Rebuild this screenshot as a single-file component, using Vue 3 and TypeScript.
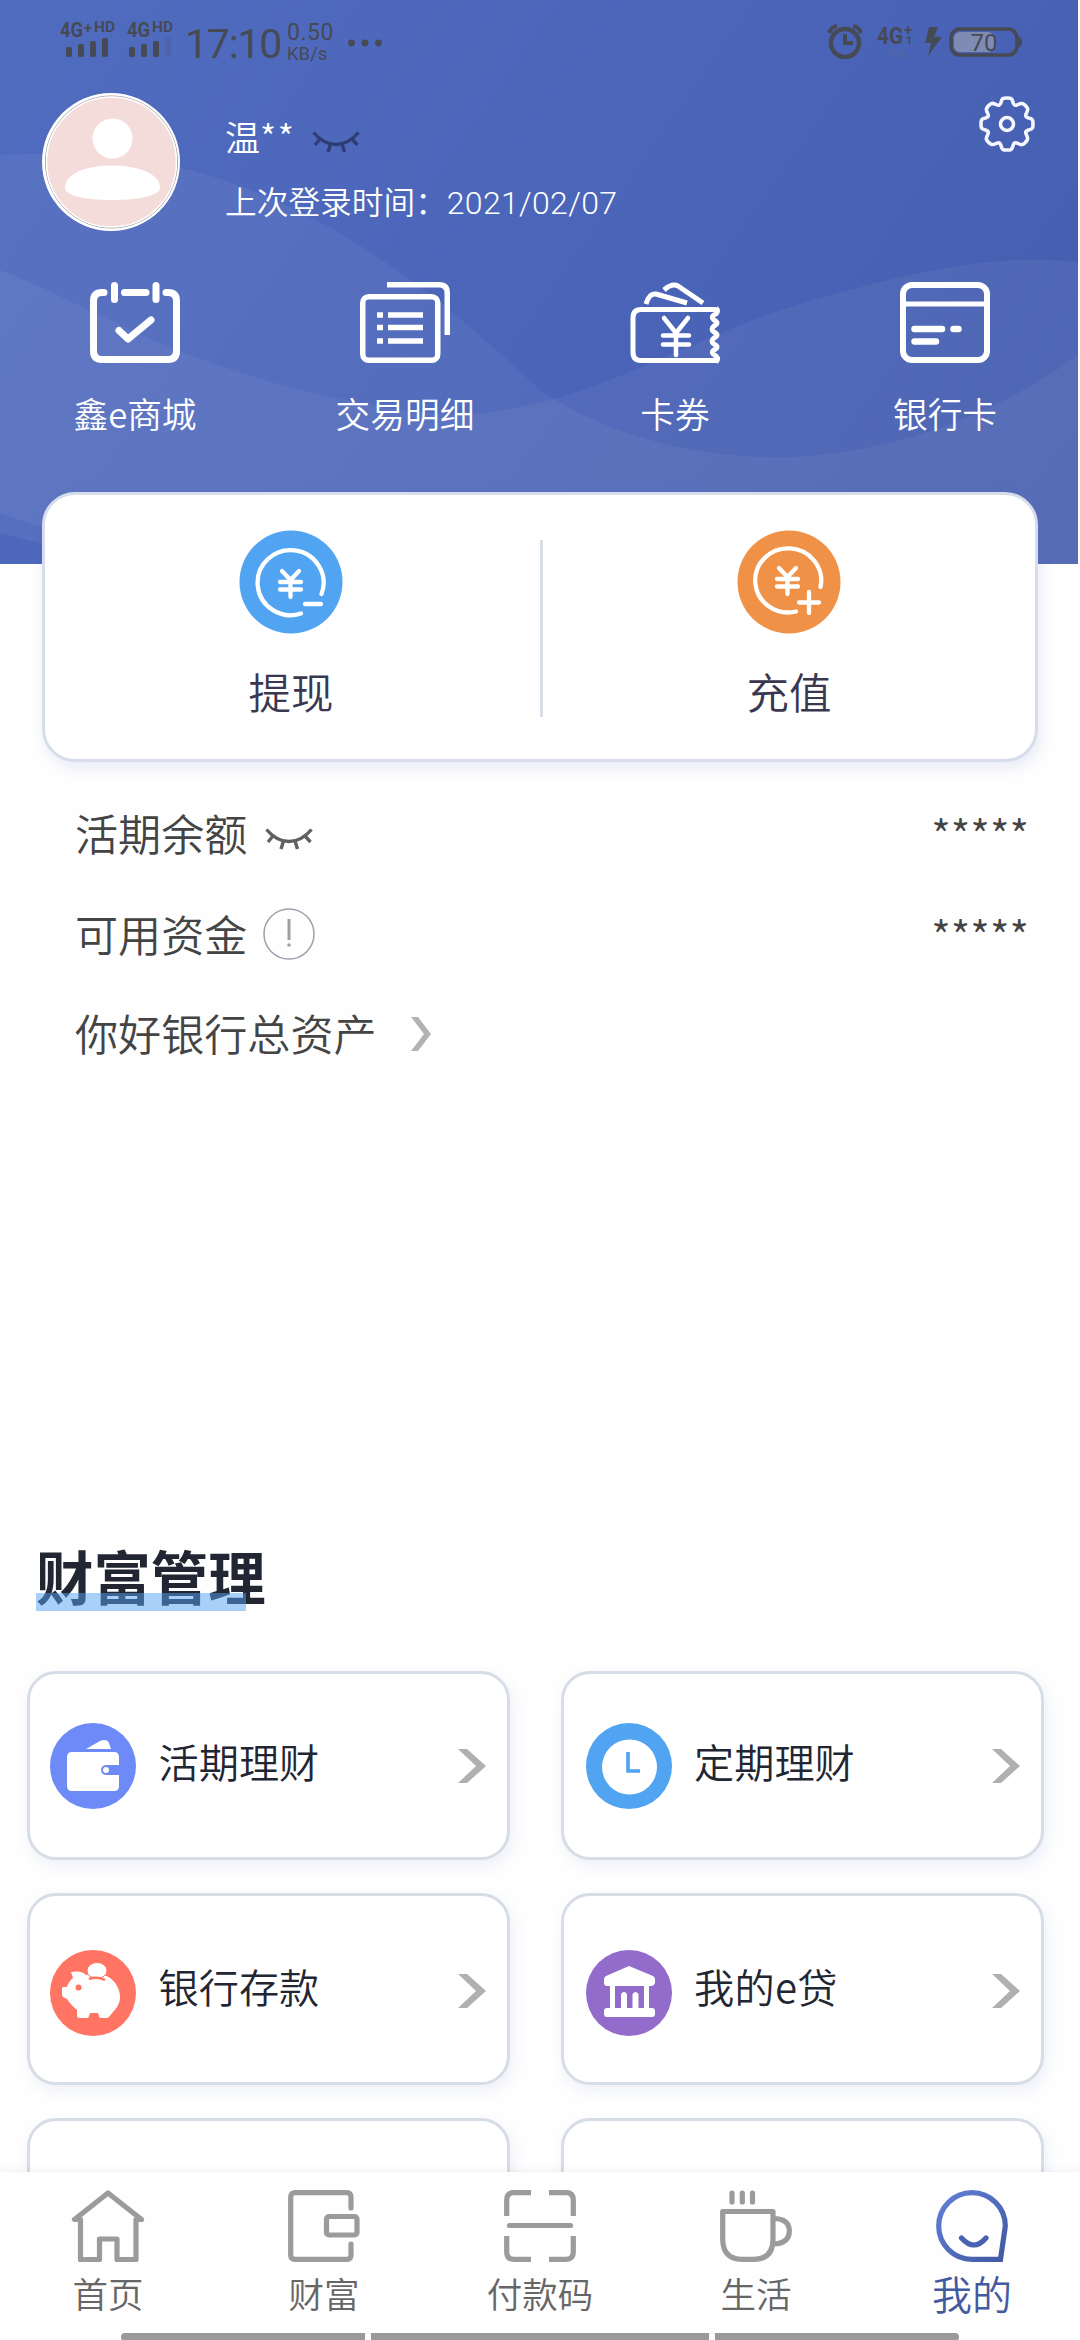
<script setup lang="ts">
interface Shortcut { id: string; label: string }
interface Product { id: string; label: string }
interface Tab { id: string; label: string }

const shortcuts: Shortcut[] = [
  { id: 'mall', label: '鑫e商城' },
  { id: 'detail', label: '交易明细' },
  { id: 'coupon', label: '卡券' },
  { id: 'card', label: '银行卡' },
]

const products: Product[] = [
  { id: 'wallet', label: '活期理财' },
  { id: 'clock', label: '定期理财' },
  { id: 'pig', label: '银行存款' },
  { id: 'bank', label: '我的e贷' },
]

const tabs: Tab[] = [
  { id: 'home', label: '首页' },
  { id: 'wealth', label: '财富' },
  { id: 'pay', label: '付款码' },
  { id: 'life', label: '生活' },
  { id: 'mine', label: '我的' },
]
const activeTab = 'mine'
</script>

<template>
  <div class="screen">
    <main class="content">
      <header class="hero">
        <svg class="waves" width="1078" height="564" viewBox="0 0 1078 564">
          <path d="M0 155C60 152 130 153 190 170C300 200 400 258 540 390C590 425 680 460 790 457C910 452 1010 405 1078 355V564H150Q60 535 0 513Z" />
          <path d="M0 270C90 305 150 350 290 387C370 408 440 418 490 412C620 395 690 330 850 290C930 268 1000 254 1078 262V564H110Q50 545 0 533Z" />
        </svg>

        <div class="status">
          <svg class="signals" width="116" height="42" viewBox="0 0 116 42">
            <g class="sig-text">
              <text x="0" y="17" font-size="20" textLength="23" lengthAdjust="spacingAndGlyphs">4G</text>
              <text x="24" y="13" font-size="15" textLength="8" lengthAdjust="spacingAndGlyphs">+</text>
              <text x="34" y="12" font-size="14" textLength="21" lengthAdjust="spacingAndGlyphs">HD</text>
              <text x="67" y="17" font-size="20" textLength="23" lengthAdjust="spacingAndGlyphs">4G</text>
              <text x="92" y="12" font-size="14" textLength="21" lengthAdjust="spacingAndGlyphs">HD</text>
            </g>
            <g class="dark">
              <rect x="6" y="27" width="6" height="10" rx="2" /><rect x="18" y="24" width="6" height="13" rx="2" />
              <rect x="30" y="21" width="6" height="16" rx="2" /><rect x="42" y="18" width="6" height="19" rx="2" />
              <rect x="69" y="27" width="6" height="10" rx="2" /><rect x="81" y="24" width="6" height="13" rx="2" />
              <rect x="93" y="21" width="6" height="16" rx="2" />
              <rect x="105" y="18" width="6" height="19" rx="2" opacity=".18" />
            </g>
          </svg>
          <span class="time">17:10</span>
          <span class="speed"><span class="rate">0.50</span><span class="unit">KB/s</span></span>
          <svg class="more dark" width="36" height="8" viewBox="0 0 36 8">
            <circle cx="4.5" cy="4" r="3.4" /><circle cx="18" cy="4" r="3.4" /><circle cx="31.5" cy="4" r="3.4" />
          </svg>
          <svg class="sys" width="200" height="40" viewBox="0 0 200 40">
            <g fill="none" stroke="#464a55">
              <circle cx="19" cy="23" r="14" stroke-width="4.4" />
              <path d="M19 14V23H27" stroke-width="4" />
              <path d="M3 13Q5 7 11 6M35 13Q33 7 27 6" stroke-width="4" />
              <rect x="125" y="9" width="66" height="26" rx="9" stroke-width="3.600" />
            </g>
            <rect x="128" y="12" width="40" height="20" rx="6" fill="#7f8bb3" />
            <path class="dark" d="M192.500 16Q196 18 196 22T192.500 28ZM103 7H112L108 17H116L102 36L105 23H99Z" />
            <path d="M61 29H69L65 37ZM71 37H79L75 29Z" fill="#5365a3" />
            <g class="sig-text">
              <text x="51" y="24" font-size="24" textLength="26" lengthAdjust="spacingAndGlyphs">4G</text>
              <text x="78" y="15" font-size="15">+</text>
              <text x="80" y="24" font-size="11">1</text>
            </g>
            <text class="battery" x="158" y="31" text-anchor="middle">70</text>
          </svg>
        </div>

        <div class="profile">
          <svg class="avatar" width="138" height="138" viewBox="0 0 138 138">
            <circle cx="69" cy="69" r="69" fill="#fff" />
            <circle cx="69.500" cy="69" r="66" fill="#f3dcda" stroke="#777c8c" stroke-width=".8" />
            <circle cx="69.500" cy="69" r="65" fill="none" stroke="#fff" stroke-width="1.600" />
            <circle cx="70.500" cy="45.500" r="20" fill="#fff" />
            <path d="M23 94C24 80 45 72.500 70 72.500S117 80 118 94C119 103 96 107 70 107S22 103 23 94Z" fill="#fff" />
          </svg>
          <div class="who">
            <div class="name">
              <span>温<span class="stars">**</span></span>
              <svg class="eye eye-top" width="48" height="24" viewBox="0 0 48 24"><path d="M1.500 2.500C15 18.500 33 18.500 46.500 2.500M8 9L3 15M18.500 14L16 22M30 14L32.500 22M40 9L45.500 15" /></svg>
            </div>
            <div class="login">上次登录时间：<span class="date">2021/02/07</span></div>
          </div>
          <svg class="gear" width="56" height="56" viewBox="-28 -28 56 56">
            <path d="M-6-21.500C-5-26-4-26 0-26S5-26 6-21.500C7-18.500 8-18 11-19.500C15-21.500 16-20.500 18.400-18.400S21.500-15 19.500-11C18-8 18.500-7 21.500-6C26-5 26-4 26 0S26 5 21.500 6C18.500 7 18 8 19.500 11C21.500 15 20.500 16 18.400 18.400S15 21.500 11 19.500C8 18 7 18.500 6 21.500C5 26 4 26 0 26S-5 26-6 21.500C-7 18.500-8 18-11 19.500C-15 21.500-16 20.500-18.400 18.400S-21.500 15-19.500 11C-18 8-18.500 7-21.500 6C-26 5-26 4-26 0S-26-5-21.500-6C-18.500-7-18-8-19.500-11C-21.500-15-20.500-16-18.400-18.400S-15-21.500-11-19.500C-8-18-7-18.500-6-21.500Z" />
            <circle r="6.500" />
          </svg>
        </div>

        <nav class="shortcuts">
          <div v-for="s in shortcuts" :key="s.id" class="shortcut">
            <svg width="90" height="81" viewBox="0 0 90 81">
              <g v-if="s.id === 'mall'" stroke-width="7" stroke-linecap="round" stroke-linejoin="round">
                <path d="M14 10.500H12Q3.500 10.500 3.500 19V69Q3.500 77.500 12 77.500H78Q86.500 77.500 86.500 69V19Q86.500 10.500 78 10.500H76M34.500 10.500H56" />
                <path d="M24.500 3.500V17.500M66 3.500V17.500" />
                <path d="M29 48.500L38 57L61 38" />
              </g>
              <g v-else-if="s.id === 'detail'" stroke-width="5.500">
                <rect x="2.750" y="14.750" width="75" height="63.500" rx="6" />
                <path d="M27 2.750H79Q87.250 2.750 87.250 11V53" />
                <path d="M28 33H63M28 45.500H63M28 59H63M17 33H23M17 45.500H23M17 59H23" />
              </g>
              <g v-else-if="s.id === 'coupon'" stroke-width="5" stroke-linejoin="round">
                <path d="M86 27.500H11Q3 27.500 3 36V70Q3 78.500 11 78.500H87" />
                <path d="M86 26Q89 29 86 32Q80 34 84 38Q90 41 84 44Q80 47 84 50Q90 53 84 56Q80 59 84 62Q90 65 84 68Q80 71 86 74Q89 77 86 80" />
                <path d="M16 22Q19 11 26 12Q33 14 57 21M34 8Q42 1 48 4L73 21" />
                <path d="M34 36L46 51L58 36M46 51V73M33 53.500H59M33 62.500H59" stroke-width="4.500" stroke-linecap="round" />
              </g>
              <g v-else stroke-width="6">
                <rect x="3" y="3" width="84" height="75" rx="9" />
                <path d="M3 22H87" stroke-width="5" />
                <path d="M14.500 47H42M53.500 47H58.500M14.500 59.500H36" stroke-linecap="round" stroke-width="6.500" />
              </g>
            </svg>
            <span>{{ s.label }}</span>
          </div>
        </nav>
      </header>

      <section class="funds">
        <div class="fund withdraw">
          <svg width="104" height="104" viewBox="-52 -52 104 104">
            <circle r="51.500" fill="#51a4f2" />
            <path d="M30.500 12A33 32.500 0 1 0 10 31.500" />
            <path d="M-9-11L-.5-2L8-11M-.5-2V15M-11 0H10M-11 7.500H10" />
            <path d="M14 22H30" />
          </svg>
          <span>提现</span>
        </div>
        <i class="divider" />
        <div class="fund">
          <svg width="104" height="104" viewBox="-52 -52 104 104">
            <circle r="51.500" fill="#f09148" />
            <path d="M31.500 5A33 32 0 1 0 7 29.500" />
            <path d="M-10-14L-1.500-5L7-14M-1.500-5V12M-12-3H9M-12 4.500H9" />
            <path d="M10 20.500H30M20 10V31" />
          </svg>
          <span>充值</span>
        </div>
      </section>

      <section class="balances">
        <div class="row">
          <span>活期余额</span>
          <svg class="eye eye-row" width="48" height="24" viewBox="0 0 48 24"><path d="M1.500 2.500C15 18.500 33 18.500 46.500 2.500M8 9L3 15M18.500 14L16 22M30 14L32.500 22M40 9L45.500 15" /></svg>
          <span class="masked">*****</span>
        </div>
        <div class="row">
          <span>可用资金</span>
          <svg class="info" width="52" height="52" viewBox="0 0 52 52">
            <circle cx="26" cy="26" r="25" /><path d="M26 11V32" /><circle class="dot" cx="26" cy="37" r="1.800" />
          </svg>
          <span class="masked">*****</span>
        </div>
        <div class="row total">
          <span>你好银行总资产</span>
          <svg class="go" width="20" height="34" viewBox="0 0 20 34"><path d="M0 0H7L20 17L7 34H0L13 17Z" /></svg>
        </div>
      </section>

      <h2 class="title">财富管理</h2>

      <section class="products">
        <div v-for="p in products" :key="p.id" class="product" :class="'is-' + p.id">
          <svg class="badge" width="86" height="86" viewBox="0 0 86 86">
            <g v-if="p.id === 'wallet'">
              <circle cx="43" cy="43" r="43" fill="#6d8af7" />
              <path d="M22 29H64Q69 29 69 34V42H57Q51 42 51 47T57 52H69V63Q69 68 64 68H22Q17 68 17 63V34Q17 29 22 29Z" fill="#fff" />
              <circle cx="56" cy="47" r="3" fill="#fff" />
              <path d="M36 26L50 18Q57 15 59 20L61 26Z" fill="#fff" />
            </g>
            <g v-else-if="p.id === 'clock'">
              <circle cx="43" cy="43" r="43" fill="#51a4f2" />
              <circle cx="43.500" cy="44" r="27.500" fill="#fff" />
              <path d="M42 29V48H54" fill="none" stroke="#51a4f2" stroke-width="3.600" />
            </g>
            <g v-else-if="p.id === 'pig'">
              <circle cx="43" cy="43" r="43" fill="#ff7462" />
              <path d="M21 22Q32 20 36 25Q45 22 54 25C64 28 70 38 70 47C70 54 66 59 63 62L59 67Q58 68 56 68H51Q49 68 49 66L48 63H40L39 66Q39 68 37 68H29Q27 68 27 66V60Q20 54 17 49L13 47Q12 46 12 44V38Q12 37 14 37H17Q18 32 23 28Z" fill="#fff" />
              <ellipse cx="47" cy="20.500" rx="10" ry="8" fill="#fff" stroke="#ff7462" stroke-width="1" />
              <path d="M39 29Q47 26 55 30" fill="none" stroke="#ff7462" stroke-width="2.500" />
              <circle cx="28.500" cy="37.500" r="3" fill="#ff7462" />
            </g>
            <g v-else>
              <circle cx="43" cy="43" r="43" fill="#926bcb" />
              <path d="M43 16L67 26Q69 27 69 29V33Q68 36 65 36H63V58H66Q69 58 69 61V64Q69 67 66 67H21Q18 67 18 64V61Q18 58 21 58H24V36H21Q18 36 18 33V29Q18 27 20 26Z" fill="#fff" />
              <path d="M29 36H58V58H52.500V44Q49.500 40 46.500 44V58H41V44Q38 40 35 44V58H29Z" fill="#926bcb" />
            </g>
          </svg>
          <span class="label">{{ p.label }}</span>
          <svg class="arrow" width="28" height="34" viewBox="0 0 28 34"><path d="M0 0H9L28 17L9 34H0L18 17Z" /></svg>
        </div>
        <div class="product" />
        <div class="product" />
      </section>
    </main>

    <nav class="tabbar">
      <div class="tabs">
        <div v-for="t in tabs" :key="t.id" class="tab" :class="{ active: t.id === activeTab }">
          <svg width="72" height="72" viewBox="0 0 72 72">
            <path v-if="t.id === 'home'" d="M36 3L2.500 29.500H8.500V69.500H27.500V49H45V69.500H64V29.500H69.500Z" />
            <g v-else-if="t.id === 'wealth'">
              <path d="M63 18V7Q63 2.700 59 2.700H7Q2.700 2.700 2.700 7V65Q2.700 69.300 7 69.300H59Q63 69.300 63 65V54" stroke-linecap="round" />
              <rect x="38.500" y="26.500" width="30.500" height="18.500" rx="2.500" />
            </g>
            <g v-else-if="t.id === 'pay'">
              <path d="M27 2.700H10Q2.700 2.700 2.700 10V26M45 2.700H62Q69.300 2.700 69.300 10V26M2.700 46V62Q2.700 69.300 10 69.300H27M69.300 46V62Q69.300 69.300 62 69.300H45" />
              <path d="M5.500 35.500H66.500" stroke-linecap="round" />
            </g>
            <g v-else-if="t.id === 'life'">
              <path d="M2.700 21.500H53V49Q53 69.300 34 69.300H22Q2.700 69.300 2.700 49ZM53 28.500Q69.300 28.500 69.300 41T53 54" />
              <path d="M12 3V12M22.300 3V12M32.500 3V12" stroke-linecap="round" />
            </g>
            <g v-else>
              <path d="M36 69.300A33.300 33.300 0 1 1 69.300 36L64.500 69.300Z" stroke="url(#mine)" stroke-linejoin="miter" />
              <path d="M25.500 48Q38 62 50 48" stroke="#4861b0" stroke-linecap="round" />
              <defs><linearGradient id="mine" x1="0" y1="0" x2="1" y2="1"><stop offset="0" stop-color="#6280d6" /><stop offset="1" stop-color="#4259a3" /></linearGradient></defs>
            </g>
          </svg>
          <span>{{ t.label }}</span>
        </div>
      </div>
      <div class="gesture"><i /><i /><i /></div>
    </nav>
  </div>
</template>

<style>
body { margin: 0; background: #fefefe; }
</style>

<style scoped>
.screen {
  width: 1080px;
  height: 2340px;
  overflow: hidden;
  display: flex;
  flex-direction: column;
  background: #fefefe;
  font-family: "Noto Sans CJK SC", "Noto Sans", sans-serif;
  font-weight: 350;
}
svg { display: block; flex: none; overflow: visible; }
.content { height: 2172px; overflow: hidden; }
.hero {
  position: relative;
  width: 1078px;
  height: 564px;
  background: linear-gradient(125deg, #506cbf 0%, #4b65b9 50%, #445dae 100%);
  color: #fff;
}
.waves { position: absolute; inset: 0; }
.waves path { fill: #fff; fill-opacity: .05; }
.status {
  position: relative;
  height: 73px;
  padding: 20px 0 0 60px;
  display: flex;
  color: #464a55;
  font-family: Roboto, sans-serif;
  font-weight: 400;
}
.status > * { flex: none; }
.dark { fill: #464a55; }
.sig-text text { fill: #464a55; font-family: Roboto, sans-serif; font-weight: 700; }
.time { margin-left: 9px; width: 101px; font-size: 41px; line-height: 49px; letter-spacing: -1.200px; }
.speed { display: flex; flex-direction: column; width: 60px; margin-left: 1px; }
.rate { font-size: 23px; line-height: 24px; margin-top: 1px; letter-spacing: .500px; }
.unit { font-size: 18.500px; line-height: 20px; margin-top: -1px; }
.more { margin-top: 19px; }
.sys { margin-left: 443px; }
.battery { fill: #464a55; font-size: 24px; }
.profile { position: relative; display: flex; height: 138px; padding-left: 42px; }
.who { margin-left: 45px; }
.name { display: flex; font-size: 35px; line-height: 50px; margin-top: 18px; }
.stars { letter-spacing: 1.600px; }
.login { font-size: 31.700px; line-height: 46px; margin-top: 16px; }
.date { font-family: Roboto, sans-serif; font-weight: 300; font-size: 32px; letter-spacing: .300px; }
.eye path { fill: none; stroke-width: 3.400; stroke: #606060; }
.eye-top { margin: 19px 0 0 17px; }
.eye-top path { stroke: #2e3d73; }
.gear { margin: 3px 43px 0 auto; fill: none; stroke: #f4f7ff; stroke-width: 3.600; }
.shortcuts { position: relative; width: 1080px; display: grid; grid-template-columns: repeat(4, 270px); margin-top: 51px; }
.shortcut { display: flex; flex-direction: column; align-items: center; font-size: 34.700px; line-height: 48px; }
.shortcut svg { fill: none; stroke: #fff; margin-bottom: 26px; }
.funds {
  position: relative;
  box-sizing: border-box;
  width: 996px;
  height: 270px;
  margin: -72px 0 0 42px;
  display: flex;
  border: 3px solid #d7ddea;
  border-radius: 33px;
  background: #fff;
  box-shadow: 3px 6px 14px rgba(80, 100, 200, .12);
}
.fund { width: 492px; padding-top: 35px; display: flex; flex-direction: column; align-items: center; font-size: 42.500px; line-height: 56px; color: #3a3850; }
.withdraw { padding-right: 3px; }
.fund svg { margin-bottom: 29px; }
.fund path { fill: none; stroke: #fff; stroke-width: 4.300; stroke-linecap: round; }
.divider { width: 3px; height: 177px; margin-top: 45px; background: #d9dde6; }
.balances { margin-top: 19px; padding: 0 51px 0 75px; color: #444; }
.row { height: 101px; display: flex; align-items: center; font-size: 43.100px; }
.total { height: 98px; }
.eye-row { margin: 14px 0 0 18px; }
.masked { margin: 3px 0 0 auto; font-size: 42.500px; }
.info { margin: 3px 0 0 16px; fill: none; stroke: #9ba1ad; stroke-width: 1.500; }
.info path { stroke: #a0a0a0; stroke-width: 3; }
.info .dot { fill: #a0a0a0; stroke: none; }
.go { margin: 3px 0 0 34px; fill: #b2b2b2; }
.title {
  position: relative;
  margin: 459px 0 0 36px;
  font-size: 57.400px;
  line-height: 70px;
  font-weight: 700;
  color: #222633;
}
.title::after { content: ""; position: absolute; left: 0; top: 53px; width: 210px; height: 18px; background: rgba(84, 162, 243, .5); }
.products {
  margin: 61px 0 0 27px;
  display: grid;
  grid-template-columns: 483px 483px;
  grid-template-rows: 189px 192px 192px;
  gap: 33px 51px;
}
.product {
  box-sizing: border-box;
  display: flex;
  align-items: center;
  padding: 0 21px 0 20px;
  border: 3px solid #d7dde7;
  border-radius: 29px;
  background: #fff;
  box-shadow: 3px 6px 14px rgba(80, 100, 200, .09);
  font-size: 40.200px;
  color: #222633;
}
.product:nth-child(even) { padding-left: 21.500px; }
.label { margin: -10px 0 0 22.500px; }
.is-pig .label, .is-bank .label { margin-top: -8px; }
.is-bank .label { letter-spacing: .300px; }
.arrow { margin-left: auto; fill: #b0b0b0; }
.is-pig .badge, .is-bank .badge { margin-top: 8px; }
.is-pig .arrow, .is-bank .arrow { margin-top: 4px; }
.tabbar { position: relative; height: 168px; background: #fefefe; box-shadow: 0 -2px 8px rgba(0, 0, 0, .05); }
.tabs { display: grid; grid-template-columns: repeat(5, 216px); padding-top: 18px; height: 143px; }
.tab { display: flex; flex-direction: column; align-items: center; font-size: 35.500px; line-height: 50px; color: #666; }
.tab svg { fill: none; stroke: #9b9b9b; stroke-width: 5.200; stroke-linejoin: round; margin-bottom: 6px; }
.active { font-size: 40px; color: #4359a0; }
.gesture { display: flex; gap: 6px; justify-content: center; }
.gesture i { width: 338px; height: 8px; background: #999; }
.gesture i:first-child { width: 244px; border-radius: 4px 0 0 4px; }
.gesture i:last-child { width: 244px; border-radius: 0 4px 4px 0; }
</style>
